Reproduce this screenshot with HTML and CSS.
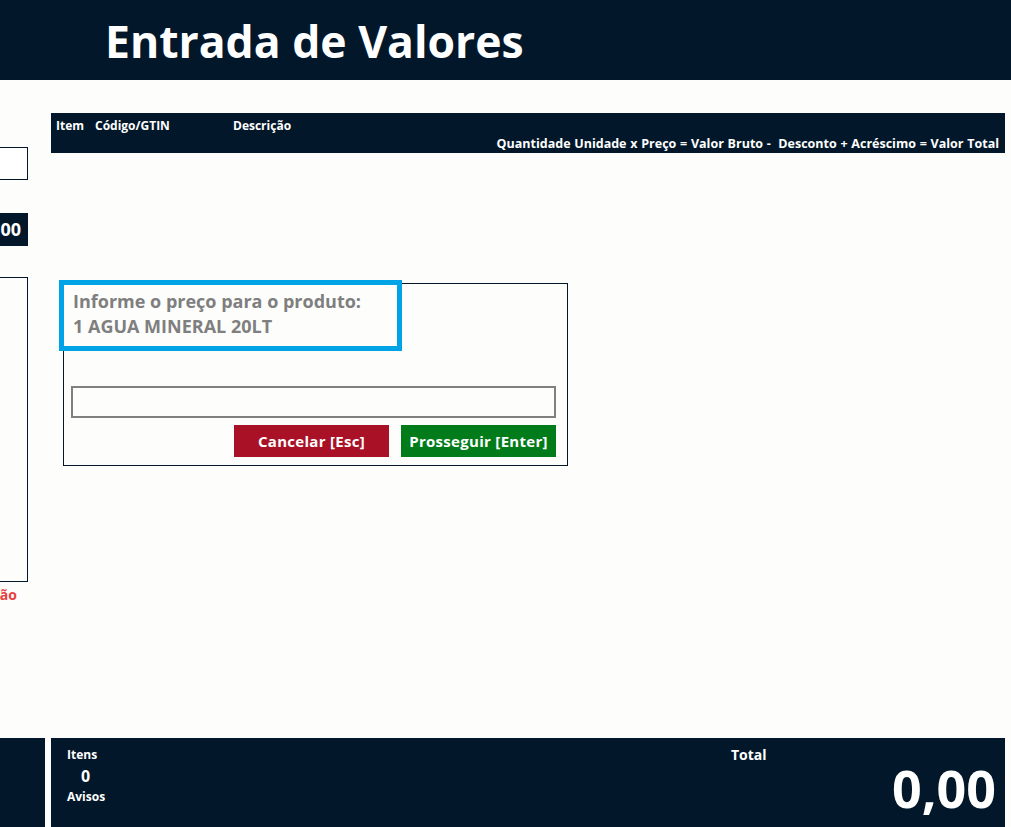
FILE: index.html
```html
<!DOCTYPE html>
<html lang="pt-BR">
<head>
    <meta charset="UTF-8">
    <meta name="viewport" content="width=device-width, initial-scale=1.0">
    <title>Entrada de Valores</title>
    <link rel="stylesheet" href="styles.css">
</head>
<body>

    <!-- Topo -->
    <header class="topbar">
        <h1>Entrada de Valores</h1>
    </header>

    <div class="workspace">
        <!-- Painel lateral (cortado pela borda da tela) -->
        <aside class="side">
            <div class="side-input"></div>
            <div class="side-total">0,00</div>
            <div class="side-list"></div>
            <div class="side-status">Sem conexão</div>
        </aside>

        <main class="content">
            <div class="grid-head">
                <div class="grid-row1">
                    <span class="col-item">Item</span>
                    <span class="col-code">Código/GTIN</span>
                    <span class="col-desc">Descrição</span>
                </div>
                <div class="grid-row2">Quantidade Unidade x Preço = Valor Bruto - &nbsp;Desconto + Acréscimo = Valor Total</div>
            </div>

            <!-- Dialogo de preço -->
            <div class="dialog">
                <div class="dialog-label">
                    Informe o preço para o produto:<br>
                    1 AGUA MINERAL 20LT
                </div>
                <input class="dialog-input" type="text" value="">
                <div class="dialog-buttons">
                    <button class="btn btn-cancel">Cancelar [Esc]</button>
                    <button class="btn btn-ok">Prosseguir [Enter]</button>
                </div>
            </div>
        </main>
    </div>

    <!-- Rodapé -->
    <footer class="bottom">
        <div class="bottom-left"></div>
        <div class="bottom-main">
            <div class="counts">
                <div class="count-label">Itens</div>
                <div class="count-value">0</div>
                <div class="count-label">Avisos</div>
            </div>
            <div class="total">
                <div class="total-label">Total</div>
                <div class="total-value">0,00</div>
            </div>
        </div>
    </footer>

</body>
</html>
```

FILE: styles.css
```css
 body {
     font-family: "Open Sans", "Noto Sans", sans-serif;
     margin: 0;
     background: #fdfdfc;
     width: 1011px;
     height: 827px;
     overflow: hidden;
     display: flex;
     flex-direction: column;
 }

 /* Topo */
 .topbar {
     height: 80px;
     background: #02182a;
     display: flex;
     align-items: center;
     padding-left: 105px;
 }
 .topbar h1 {
     margin: 0;
     color: #fff;
     font-size: 44.5px;
     font-weight: 700;
 }

 .workspace {
     flex: 1;
     display: flex;
     gap: 23px;
 }

 /* Painel lateral */
 .side {
     width: 280px;
     margin-left: -252px;
     display: flex;
     flex-direction: column;
 }
 .side-input {
     margin-top: 67px;
     height: 31px;
     border: 1px solid #02182a;
     background: #fff;
 }
 .side-total {
     margin-top: 33px;
     height: 33px;
     background: #02182a;
     color: #fff;
     font-weight: 700;
     font-size: 18px;
     line-height: 33px;
     text-align: right;
     padding-right: 7px;
 }
 .side-list {
     margin-top: 31px;
     height: 303px;
     border: 1px solid #02182a;
 }
 .side-status {
     color: #e8403f;
     font-weight: 700;
     font-size: 14px;
     text-align: right;
     padding-right: 11px;
     margin-top: 3px;
 }

 .content {
     width: 954px;
     display: flex;
     flex-direction: column;
 }

 /* Cabeçalho da grade */
 .grid-head {
     margin-top: 33px;
     height: 40px;
     background: #02182a;
     color: #fff;
     font-weight: 700;
     font-size: 12px;
     box-sizing: border-box;
     padding: 4px 6px 0 5px;
 }
 .grid-row1 {
     display: flex;
     height: 18px;
 }
 .col-item { width: 39px; }
 .col-code { width: 138px; }
 .grid-row2 {
     text-align: right;
     font-size: 12.5px;
     word-spacing: 0.5px;
 }

 /* Dialogo */
 .dialog {
     margin: 130px 0 0 12px;
     width: 485px;
     height: 181px;
     border: 1px solid #02182a;
     padding: 0 11px 0 7px;
     display: flex;
     flex-direction: column;
 }
 .dialog-label {
     margin: -4px 0 0 -12px;
     width: 324px;
     height: 57px;
     border: 5px solid #00a3e6;
     padding: 4px 0 0 9px;
     color: #7f7f7f;
     font-weight: 700;
     font-size: 18px;
     line-height: 25px;
 }
 .dialog-input {
     margin-top: 35px;
     height: 32px;
     box-sizing: border-box;
     border: 2px solid #808080;
     background: #fdfdfc;
     outline: none;
     font-size: 16px;
     padding: 0 4px;
 }
 .dialog-buttons {
     margin-top: 7px;
     display: flex;
     justify-content: flex-end;
     gap: 12px;
 }
 .btn {
     width: 155px;
     height: 32px;
     border: none;
     color: #fff;
     font-family: inherit;
     font-weight: 700;
     font-size: 15px;
     letter-spacing: 0.3px;
     cursor: pointer;
 }
 .btn-cancel { background: #a91226; }
 .btn-ok { background: #027c1b; }

 /* Rodapé */
 .bottom {
     height: 89px;
     display: flex;
     gap: 6px;
 }
 .bottom-left {
     width: 45px;
     background: #02182a;
 }
 .bottom-main {
     width: 954px;
     background: #02182a;
     color: #fff;
     display: flex;
     justify-content: space-between;
     box-sizing: border-box;
     padding: 8px 9px 0 16px;
 }
 .counts {
     font-weight: 700;
     font-size: 12px;
 }
 .count-label { line-height: 18px; }
 .count-value {
     font-size: 16px;
     line-height: 24px;
     padding-left: 14px;
 }
 .total {
     width: 265px;
     display: flex;
     flex-direction: column;
 }
 .total-label {
     font-weight: 700;
     font-size: 14px;
     line-height: 18px;
 }
 .total-value {
     align-self: flex-end;
     font-weight: 700;
     font-size: 52px;
     line-height: 60px;
     margin-top: -6px;
 }
```
